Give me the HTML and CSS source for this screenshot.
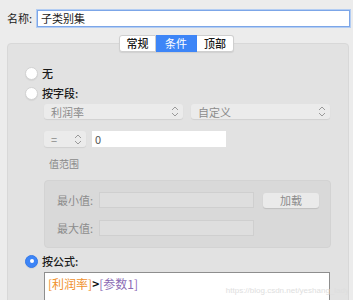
FILE: index.html
```html
<!DOCTYPE html>
<html lang="zh-CN">
<head>
    <meta charset="UTF-8">
    <title>子类别集</title>
    <link rel="stylesheet" href="styles.css">
</head>
<body>
    <div class="name-row">
        <label class="name-label">名称:</label>
        <div class="name-input">子类别集</div>
    </div>

    <div class="tabs">
        <span class="tab">常规</span>
        <span class="tab active">条件</span>
        <span class="tab">顶部</span>
    </div>

    <div class="panel">
        <div class="radio-row first">
            <span class="radio"></span>
            <span class="radio-text">无</span>
        </div>
        <div class="radio-row">
            <span class="radio"></span>
            <span class="radio-text">按字段:</span>
        </div>

        <div class="sub">
            <div class="popup-row">
                <div class="popup wide">
                    <span>利润率</span>
                    <svg class="chevron" width="8" height="11" viewBox="0 0 8 11"><path d="M1 4 L4 1 L7 4 M1 7 L4 10 L7 7" fill="none" stroke="#9a9a9a" stroke-width="1"/></svg>
                </div>
                <div class="popup wide">
                    <span>自定义</span>
                    <svg class="chevron" width="8" height="11" viewBox="0 0 8 11"><path d="M1 4 L4 1 L7 4 M1 7 L4 10 L7 7" fill="none" stroke="#9a9a9a" stroke-width="1"/></svg>
                </div>
            </div>

            <div class="cond-row">
                <div class="popup small">
                    <span>=</span>
                    <svg class="chevron" width="8" height="11" viewBox="0 0 8 11"><path d="M1 4 L4 1 L7 4 M1 7 L4 10 L7 7" fill="none" stroke="#9a9a9a" stroke-width="1"/></svg>
                </div>
                <div class="value-input">0</div>
            </div>

            <div class="range-title">值范围</div>

            <div class="range-box">
                <div class="range-row">
                    <span class="range-label">最小值:</span>
                    <div class="range-input"></div>
                    <span class="load-btn">加载</span>
                </div>
                <div class="range-row">
                    <span class="range-label">最大值:</span>
                    <div class="range-input"></div>
                </div>
            </div>
        </div>

        <div class="radio-row formula">
            <span class="radio checked"></span>
            <span class="radio-text">按公式:</span>
        </div>

        <div class="sub">
            <div class="formula-box">
                <span class="field">[利润率]</span><span class="op">&gt;</span><span class="param">[参数1]</span>
                <span class="watermark">https://blog.csdn.net/yeshang_lady</span>
            </div>
        </div>
    </div>
</body>
</html>
```

FILE: styles.css
```css
body {
    margin: 0;
    background-color: #ececec;
    font-family: "Noto Sans CJK SC", "Liberation Sans", sans-serif;
    font-size: 11px;
    color: #1a1a1a;
    height: 300px;
    overflow: hidden;
}

/* name field */
.name-row {
    display: flex;
    align-items: center;
    padding: 10px 3px 0 7px;
}
.name-label {
    width: 30px;
    line-height: 17px;
}
.name-input {
    flex: 1;
    height: 15px;
    line-height: 15px;
    background-color: #fff;
    border: 1px solid #7ca6e8;
    box-shadow: 0 0 0 1px #b3cdf3;
    padding-left: 3px;
    font-size: 11px;
}

/* segmented tabs */
.tabs {
    display: flex;
    justify-content: center;
    margin-top: 8px;
    position: relative;
    z-index: 1;
}
.tab {
    height: 17px;
    line-height: 15px;
    padding: 0;
    white-space: nowrap;
    background-color: #fff;
    border: 1px solid #cfcfcf;
    border-left: none;
    font-weight: 500;
    box-sizing: border-box;
    width: 37px;
    text-align: center;
    box-shadow: 0 1px 1px rgba(0, 0, 0, 0.08);
}
.tab:first-child {
    border-left: 1px solid #cfcfcf;
    border-radius: 3px 0 0 3px;
}
.tab:last-child {
    border-radius: 0 3px 3px 0;
}
.tab.active {
    width: 41px;
    background-color: #3d85f7;
    border-color: #3d85f7;
    color: #fff;
    font-weight: 400;
}

/* main panel */
.panel {
    margin: -9px 4px 0 7px;
    height: 262px;
    background-color: #e2e2e2;
    border: 1px solid #d8d8d8;
    border-radius: 4px;
    padding-left: 17px;
    box-sizing: border-box;
    overflow: hidden;
}

.radio-row {
    display: flex;
    align-items: center;
    height: 20px;
}
.radio-row.first {
    margin-top: 19px;
}
.radio-row.formula {
    margin-top: 3px;
}
.radio {
    width: 11px;
    height: 11px;
    border-radius: 50%;
    background-color: #fff;
    border: 1px solid #d2d2d2;
    box-shadow: 0 1px 1px rgba(0, 0, 0, 0.06);
    margin-right: 4px;
    box-sizing: content-box;
    position: relative;
}
.radio.checked {
    background-color: #3d85f7;
    border-color: #3479e8;
}
.radio.checked::after {
    content: "";
    position: absolute;
    left: 3.5px;
    top: 3.5px;
    width: 4px;
    height: 4px;
    border-radius: 50%;
    background-color: #fff;
}
.radio-text {
    font-weight: 500;
}

.sub {
    padding-left: 19px;
}

/* popups */
.popup-row {
    display: flex;
    gap: 8px;
    margin-top: 1px;
}
.popup {
    display: flex;
    align-items: center;
    justify-content: space-between;
    height: 15px;
    background-color: #ebebeb;
    border-radius: 3px;
    box-shadow: 0 1px 1px rgba(0, 0, 0, 0.08);
    color: #8c8c8c;
    padding: 0 4px 0 7px;
    box-sizing: content-box;
}
.popup.wide {
    width: 128px;
}
.popup.small {
    width: 31px;
    height: 16px;
    padding-left: 7px;
}
.chevron {
    display: block;
}

.cond-row {
    display: flex;
    gap: 6px;
    margin-top: 12px;
}
.value-input {
    width: 131px;
    height: 16px;
    line-height: 16px;
    background-color: #fff;
    padding-left: 3px;
    color: #555;
    font-size: 11px;
}

.range-title {
    margin-top: 9px;
    padding-left: 5px;
    line-height: 16px;
    font-size: 10px;
    color: #8a8a8a;
}

.range-box {
    margin-top: 8px;
    width: 287px;
    height: 68px;
    background-color: #d9d9d9;
    border: 1px solid #d3d3d3;
    border-radius: 4px;
    box-sizing: border-box;
    padding: 11px 0 0 12px;
    display: flex;
    flex-direction: column;
    gap: 12px;
}
.range-row {
    display: flex;
    align-items: center;
    height: 16px;
}
.range-label {
    width: 42px;
    color: #8c8c8c;
    font-size: 11px;
}
.range-input {
    width: 153px;
    height: 14px;
    background-color: #dedede;
    border: 1px solid #cfcfcf;
}
.load-btn {
    margin-left: 9px;
    width: 56px;
    height: 15px;
    line-height: 15px;
    text-align: center;
    background-color: #eaeaea;
    border-radius: 3px;
    box-shadow: 0 1px 1px rgba(0, 0, 0, 0.12);
    color: #8c8c8c;
}

/* formula text */
.formula-box {
    margin-top: 1px;
    width: 286px;
    height: 40px;
    background-color: #fff;
    border: 1px solid #8e8e8e;
    border-bottom: none;
    box-sizing: border-box;
    padding: 2px 0 0 3px;
    position: relative;
    font-size: 12px;
}
.field {
    color: #f0912e;
}
.op {
    color: #111;
    font-weight: 700;
}
.param {
    color: #8b6bb5;
}
.watermark {
    position: absolute;
    right: -20px;
    top: 13px;
    font-family: "Liberation Sans", sans-serif;
    font-size: 8px;
    color: #dedede;
    white-space: nowrap;
}
```
